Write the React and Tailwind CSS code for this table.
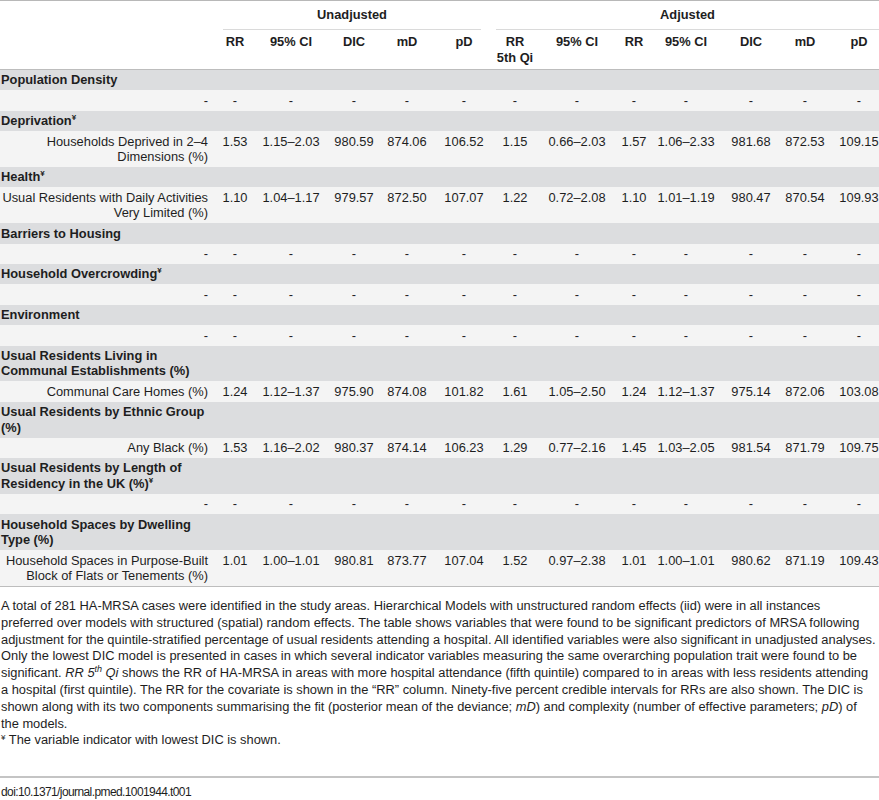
// Table 1 - HA-MRSA relative risks, unadjusted vs adjusted
const COLS = [
  { key: 'rr', ml: 'ml-0' },
  { key: 'ci', ml: 'ml-[16px]' },
  { key: 'dic', ml: 'ml-[23px]' },
  { key: 'md', ml: 'ml-[13px]' },
  { key: 'pd', ml: 'ml-[17px]' },
  { key: 'rr5', ml: 'ml-[11px]' },
  { key: 'aci', ml: 'ml-[22px]' },
  { key: 'arr', ml: 'ml-[17px]' },
  { key: 'aci2', ml: 'ml-[12px]' },
  { key: 'adic', ml: 'ml-[25px]' },
  { key: 'amd', ml: 'ml-[14px]' },
  { key: 'apd', ml: 'ml-[14px]' },
];

const HEAD = ['RR', '95% CI', 'DIC', 'mD', 'pD', ['RR', '5th Qi'], '95% CI', 'RR', '95% CI', 'DIC', 'mD', 'pD'];

const DASHES = Array(12).fill('-');

// small raised yen mark used as footnote marker
const Yen = () => <span className="relative -top-[5px] text-[8px] leading-[0]">¥</span>;

const ROWS = [
  { cat: ['Population Density'] },
  { label: ['-'], values: DASHES },
  { cat: [<>Deprivation<Yen /></>] },
  { label: ['Households Deprived in 2–4', 'Dimensions (%)'], values: ['1.53', '1.15–2.03', '980.59', '874.06', '106.52', '1.15', '0.66–2.03', '1.57', '1.06–2.33', '981.68', '872.53', '109.15'] },
  { cat: [<>Health<Yen /></>] },
  { label: ['Usual Residents with Daily Activities', 'Very Limited (%)'], values: ['1.10', '1.04–1.17', '979.57', '872.50', '107.07', '1.22', '0.72–2.08', '1.10', '1.01–1.19', '980.47', '870.54', '109.93'] },
  { cat: ['Barriers to Housing'] },
  { label: ['-'], values: DASHES },
  { cat: [<>Household Overcrowding<Yen /></>] },
  { label: ['-'], values: DASHES },
  { cat: ['Environment'] },
  { label: ['-'], values: DASHES },
  { cat: ['Usual Residents Living in', 'Communal Establishments (%)'] },
  { label: ['Communal Care Homes (%)'], values: ['1.24', '1.12–1.37', '975.90', '874.08', '101.82', '1.61', '1.05–2.50', '1.24', '1.12–1.37', '975.14', '872.06', '103.08'] },
  { cat: ['Usual Residents by Ethnic Group', '(%)'] },
  { label: ['Any Black (%)'], values: ['1.53', '1.16–2.02', '980.37', '874.14', '106.23', '1.29', '0.77–2.16', '1.45', '1.03–2.05', '981.54', '871.79', '109.75'] },
  { cat: ['Usual Residents by Length of', <>Residency in the UK (%)<Yen /></>] },
  { label: ['-'], values: DASHES },
  { cat: ['Household Spaces by Dwelling', 'Type (%)'] },
  { label: ['Household Spaces in Purpose-Built', 'Block of Flats or Tenements (%)'], values: ['1.01', '1.00–1.01', '980.81', '873.77', '107.04', '1.52', '0.97–2.38', '1.01', '1.00–1.01', '980.62', '871.19', '109.43'] },
];

function Lines({ lines }) {
  return lines.map((l, i) => (
    <div key={i} className="whitespace-nowrap">{l}</div>
  ));
}

function Cells({ values, bold }) {
  return COLS.map((c, i) => {
    const v = values[i];
    return (
      <div key={c.key} className={`${c.ml} w-[40px] shrink-0 flex flex-col items-center ${bold ? 'font-bold' : ''}`}>
        {Array.isArray(v) ? <Lines lines={v} /> : <div className="whitespace-nowrap">{v}</div>}
      </div>
    );
  });
}

function Row({ row }) {
  if (row.cat) {
    return (
      <div className="bg-[#dcdddf] py-[2.45px] pl-[1px] font-bold">
        <Lines lines={row.cat} />
      </div>
    );
  }
  return (
    <div className="flex items-start bg-[#f4f4f4] py-[2.45px]">
      <div className="w-[215px] shrink-0 pr-[7px] flex flex-col items-end">
        <Lines lines={row.label} />
      </div>
      <Cells values={row.values} />
    </div>
  );
}

const NOTES = [
  'A total of 281 HA-MRSA cases were identified in the study areas. Hierarchical Models with unstructured random effects (iid) were in all instances',
  'preferred over models with structured (spatial) random effects. The table shows variables that were found to be significant predictors of MRSA following',
  'adjustment for the quintile-stratified percentage of usual residents attending a hospital. All identified variables were also significant in unadjusted analyses.',
  'Only the lowest DIC model is presented in cases in which several indicator variables measuring the same overarching population trait were found to be',
  <>significant. <i>RR 5<span className="relative -top-[5px] text-[9px] leading-[0]">th</span> Qi</i> shows the RR of HA-MRSA in areas with more hospital attendance (fifth quintile) compared to in areas with less residents attending</>,
  'a hospital (first quintile). The RR for the covariate is shown in the “RR” column. Ninety-five percent credible intervals for RRs are also shown. The DIC is',
  <>shown along with its two components summarising the fit (posterior mean of the deviance; <i>mD</i>) and complexity (number of effective parameters; <i>pD</i>) of</>,
  'the models.',
  <><span className="relative -top-[4px] text-[8px] leading-[0]">¥</span> The variable indicator with lowest DIC is shown.</>,
];

export default function App() {
  return (
    <div className="w-[879px] h-[800px] overflow-hidden bg-white text-[#1e1e1e] text-[12.85px] leading-[15.5px]" style={{ fontFamily: '"Liberation Sans", Arial, sans-serif' }}>
      {/* header */}
      <div className="border-t border-[#b8b8b8]">
        <div className="flex h-[29px] items-center font-bold">
          <div className="w-[223px] shrink-0" />
          <div className="w-[258px] shrink-0 h-full flex items-center justify-center border-b border-[#dadada]">Unadjusted</div>
          <div className="w-[15px] shrink-0" />
          <div className="flex-1 h-full flex items-center justify-center border-b border-[#dadada]">Adjusted</div>
        </div>
        <div className="flex items-start pt-[4px] h-[39px]">
          <div className="w-[215px] shrink-0" />
          <Cells values={HEAD} bold />
        </div>
      </div>
      {/* body */}
      <div className="border-t border-b border-[#bdbdbd]">
        {ROWS.map((r, i) => <Row key={i} row={r} />)}
      </div>
      {/* notes */}
      <div className="pt-[11px] pl-[1px] leading-[16.8px]">
        {NOTES.map((n, i) => (
          <div key={i} className="whitespace-nowrap">{n}</div>
        ))}
      </div>
      <div className="mt-[27px] border-t-2 border-[#c4c4c4]" />
      <div className="pt-[7px] pl-[1px] text-[12px] tracking-[-0.6px]">doi:10.1371/journal.pmed.1001944.t001</div>
    </div>
  );
}
